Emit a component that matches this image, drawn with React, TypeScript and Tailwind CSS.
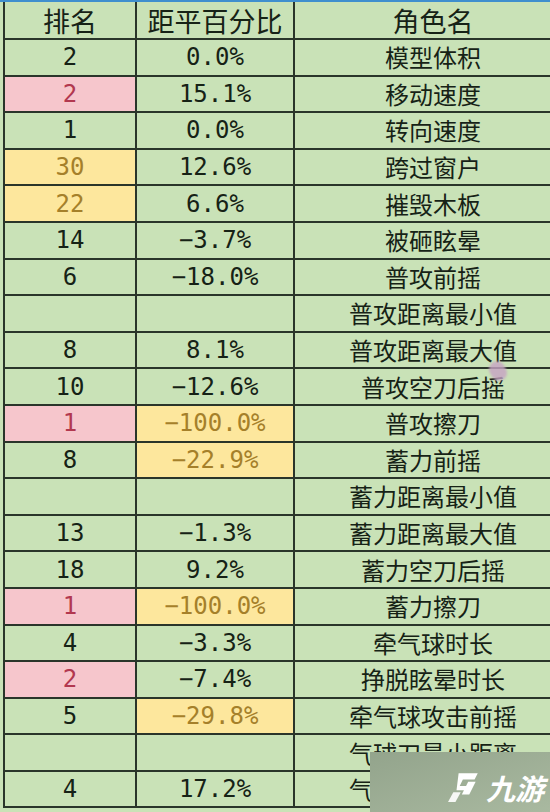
import * as React from "react";

type Tone = "none" | "pink" | "yellow";

type Row = {
  rank: string;
  rankTone?: Tone;
  pct: string;
  pctTone?: Tone;
  name: string;
};

const ROWS: Row[] = [
  { rank: "2", pct: "0.0%", name: "模型体积" },
  { rank: "2", rankTone: "pink", pct: "15.1%", name: "移动速度" },
  { rank: "1", pct: "0.0%", name: "转向速度" },
  { rank: "30", rankTone: "yellow", pct: "12.6%", name: "跨过窗户" },
  { rank: "22", rankTone: "yellow", pct: "6.6%", name: "摧毁木板" },
  { rank: "14", pct: "−3.7%", name: "被砸眩晕" },
  { rank: "6", pct: "−18.0%", name: "普攻前摇" },
  { rank: "", pct: "", name: "普攻距离最小值" },
  { rank: "8", pct: "8.1%", name: "普攻距离最大值" },
  { rank: "10", pct: "−12.6%", name: "普攻空刀后摇" },
  { rank: "1", rankTone: "pink", pct: "−100.0%", pctTone: "yellow", name: "普攻擦刀" },
  { rank: "8", pct: "−22.9%", pctTone: "yellow", name: "蓄力前摇" },
  { rank: "", pct: "", name: "蓄力距离最小值" },
  { rank: "13", pct: "−1.3%", name: "蓄力距离最大值" },
  { rank: "18", pct: "9.2%", name: "蓄力空刀后摇" },
  { rank: "1", rankTone: "pink", pct: "−100.0%", pctTone: "yellow", name: "蓄力擦刀" },
  { rank: "4", pct: "−3.3%", name: "牵气球时长" },
  { rank: "2", rankTone: "pink", pct: "−7.4%", name: "挣脱眩晕时长" },
  { rank: "5", pct: "−29.8%", pctTone: "yellow", name: "牵气球攻击前摇" },
  { rank: "", pct: "", name: "气球刀最小距离" },
  { rank: "4", pct: "17.2%", name: "气球刀最大距离" },
];

// 条件格式的底色 + 字色
const TONE: Record<Tone, string> = {
  none: "bg-[#c9e2b7] text-[#162216]",
  pink: "bg-[#f6c6cc] text-[#b2384f]",
  yellow: "bg-[#fde79d] text-[#a5802a]",
};

const mono = "font-['DejaVu_Sans_Mono',monospace] text-[24px]";
const cjk = "font-['Noto_Sans_CJK_SC',sans-serif]";

function Cell({
  children,
  tone = "none",
  className = "",
}: {
  children?: React.ReactNode;
  tone?: Tone;
  className?: string;
}) {
  return (
    <div
      className={`flex items-center justify-center border-b-2 border-r-2 border-[#2a352a] leading-none ${TONE[tone]} ${className}`}
    >
      {children}
    </div>
  );
}

function JiuyouLogo() {
  return (
    <div className="flex items-center gap-[4px] text-white">
      <svg width="34" height="32" viewBox="0 0 32 30" fill="white">
        <path d="M10 2 L28 2 L25 8 L14 8 L11 14 L17 14 L19 10 L26 10 L20 22 L13 22 L15 18 L8 18 Z" />
        <path d="M5 20 L12 20 L7 29 L0 29 Z" opacity="0.9" />
      </svg>
      <span className={`${cjk} text-[29px] font-bold italic leading-none`}>九游</span>
    </div>
  );
}

export default function App() {
  return (
    <div className="relative h-[812px] w-[550px] overflow-hidden bg-[#c9e2b7]">
      <div className="h-[2px] bg-[#3f8fce]" />
      <div className="pl-[3px]">
        <div className="flex w-[580px] border-l-2 border-[#2a352a]">
          <div className="flex w-[132px] flex-col">
            <Cell className={`h-[38px] ${cjk} text-[27px]`}>排名</Cell>
            {ROWS.map((r, i) => (
              <Cell key={i} tone={r.rankTone} className={`h-[36.6px] ${mono}`}>
                {r.rank}
              </Cell>
            ))}
          </div>
          <div className="flex w-[158px] flex-col">
            <Cell className={`h-[38px] ${cjk} text-[27px]`}>距平百分比</Cell>
            {ROWS.map((r, i) => (
              <Cell key={i} tone={r.pctTone} className={`h-[36.6px] ${mono}`}>
                {r.pct}
              </Cell>
            ))}
          </div>
          <div className="flex w-[278px] flex-col">
            <Cell className={`h-[38px] ${cjk} text-[27px]`}>角色名</Cell>
            {ROWS.map((r, i) => (
              <Cell key={i} className={`h-[36.6px] ${cjk} text-[24px]`}>
                {r.name}
              </Cell>
            ))}
          </div>
        </div>
      </div>

      {/* 鼠标光标 */}
      <div className="absolute left-[490px] top-[361px] h-[20px] w-[16px] rotate-[-30deg] rounded-full bg-[#c7a3c4] opacity-80 blur-[1px]" />

      {/* 水印 */}
      <div className="absolute left-[370px] top-[752px] flex h-[60px] w-[180px] items-center justify-end bg-gradient-to-br from-[#93a48c] to-[#a9b9a0] pr-[6px] pt-[10px]">
        <JiuyouLogo />
      </div>
    </div>
  );
}
